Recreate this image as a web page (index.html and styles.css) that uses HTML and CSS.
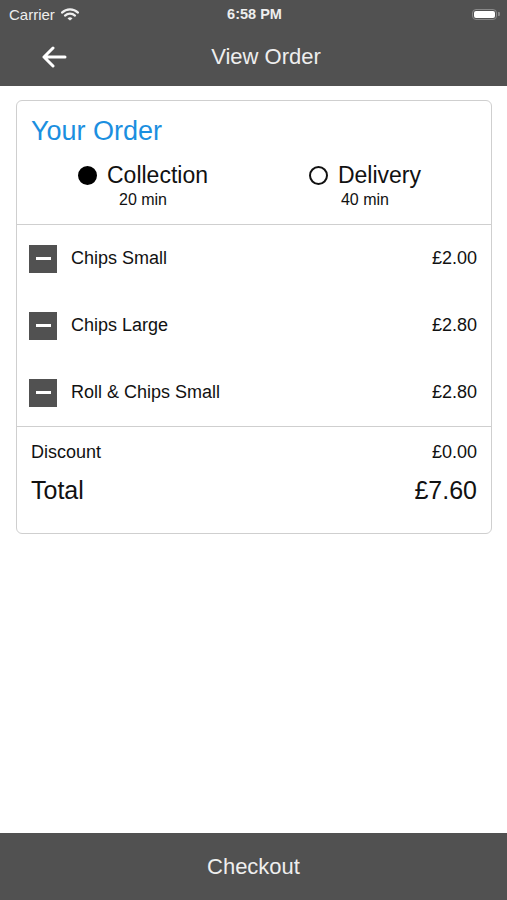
FILE: index.html
```html
<!DOCTYPE html>
<html lang="en">

<head>
    <meta charset="UTF-8">
    <meta name="viewport" content="width=device-width, initial-scale=1.0">
    <title>View Order</title>
    <link rel="stylesheet" href="styles.css">
</head>

<body>
    <div class="app">
        <div class="status-bar">
            <div class="status-left">
                <span>Carrier</span>
                <svg class="wifi" width="18" height="13" viewBox="0 0 18 13">
                    <path d="M1 4.6 A11.5 11.5 0 0 1 17 4.6" fill="none" stroke="#eee" stroke-width="2.2" stroke-linecap="round" />
                    <path d="M4 7.6 A7.2 7.2 0 0 1 14 7.6" fill="none" stroke="#eee" stroke-width="2.2" stroke-linecap="round" />
                    <path d="M6.5 10.4 L9 12.6 L11.5 10.4 A3.6 3.6 0 0 0 6.5 10.4 Z" fill="#eee" />
                </svg>
            </div>
            <div class="status-time">6:58 PM</div>
            <div class="status-right">
                <div class="battery">
                    <div class="battery-fill"></div>
                </div>
                <div class="battery-nub"></div>
            </div>
        </div>

        <div class="nav-bar">
            <button class="back-button">
                <svg width="26" height="22" viewBox="0 0 26 22">
                    <path d="M24 11 H3 M12 2 L3 11 L12 20" fill="none" stroke="#fff" stroke-width="3" stroke-linecap="round" stroke-linejoin="round" />
                </svg>
            </button>
            <div class="nav-title">View Order</div>
            <div class="nav-spacer"></div>
        </div>

        <div class="content">
            <div class="order-card">
                <div class="order-head">
                    <h1>Your Order</h1>
                    <div class="options">
                        <div class="option">
                            <div class="option-label">
                                <span class="radio checked"></span>
                                <span>Collection</span>
                            </div>
                            <div class="option-time">20 min</div>
                        </div>
                        <div class="option">
                            <div class="option-label">
                                <span class="radio"></span>
                                <span>Delivery</span>
                            </div>
                            <div class="option-time">40 min</div>
                        </div>
                    </div>
                </div>

                <div class="items">
                    <div class="item">
                        <span class="minus"></span>
                        <span class="item-name">Chips Small</span>
                        <span class="item-price">£2.00</span>
                    </div>
                    <div class="item">
                        <span class="minus"></span>
                        <span class="item-name">Chips Large</span>
                        <span class="item-price">£2.80</span>
                    </div>
                    <div class="item">
                        <span class="minus"></span>
                        <span class="item-name">Roll &amp; Chips Small</span>
                        <span class="item-price">£2.80</span>
                    </div>
                </div>

                <div class="totals">
                    <div class="discount-row">
                        <span>Discount</span>
                        <span>£0.00</span>
                    </div>
                    <div class="total-row">
                        <span>Total</span>
                        <span>£7.60</span>
                    </div>
                </div>
            </div>
        </div>

        <div class="checkout">Checkout</div>
    </div>
</body>

</html>
```

FILE: styles.css
```css
body,
html {
    margin: 0;
    padding: 0;
    height: 100%;
    font-family: "Liberation Sans", Arial, sans-serif;
    color: #111;
    background-color: #fff;
}

.app {
    height: 100%;
    display: flex;
    flex-direction: column;
}

.status-bar {
    height: 28px;
    background-color: #515151;
    color: #eee;
    display: flex;
    align-items: center;
    justify-content: space-between;
    padding: 0 7px 0 9px;
    font-size: 15px;
    flex-shrink: 0;
}

.status-left {
    display: flex;
    align-items: center;
    gap: 6px;
    width: 110px;
}

.status-time {
    font-weight: bold;
    font-size: 14.5px;
}

.status-right {
    width: 110px;
    display: flex;
    justify-content: flex-end;
    align-items: center;
}

.battery {
    width: 25px;
    height: 11px;
    border: 1.5px solid #888;
    border-radius: 4px;
    padding: 1px;
    box-sizing: border-box;
}

.battery-fill {
    height: 100%;
    background-color: #fff;
    border-radius: 2px;
}

.battery-nub {
    width: 2px;
    height: 4px;
    background-color: #888;
    border-radius: 0 1px 1px 0;
    margin-left: 1px;
}

.nav-bar {
    height: 58px;
    background-color: #515151;
    display: flex;
    align-items: center;
    padding: 0 55px 0 30px;
    flex-shrink: 0;
}

.back-button {
    width: 50px;
    height: 40px;
    background: none;
    border: none;
    padding: 0 0 0 11px;
    display: flex;
    align-items: center;
    cursor: pointer;
}

.nav-title {
    flex: 1;
    text-align: center;
    color: #eee;
    font-size: 22px;
}

.nav-spacer {
    width: 0;
}

.content {
    flex: 1;
    padding: 14px 15px 0 16px;
}

.order-card {
    border: 1px solid #cfcfcf;
    border-radius: 6px;
}

.order-head {
    padding: 14px 14px 14px;
    border-bottom: 1px solid #cfcfcf;
}

.order-head h1 {
    margin: 0;
    font-weight: normal;
    font-size: 27px;
    line-height: 32px;
    color: #1b8fe0;
}

.options {
    display: flex;
    justify-content: space-between;
    padding: 0 56px 0 47px;
    margin-top: 14px;
}

.option {
    display: flex;
    flex-direction: column;
    align-items: center;
}

.option-label {
    display: flex;
    align-items: center;
    gap: 10px;
    font-size: 23px;
    line-height: 28px;
}

.option-time {
    font-size: 16px;
    line-height: 20px;
    margin-top: 1px;
}

.radio {
    width: 19px;
    height: 19px;
    border-radius: 50%;
    border: 2px solid #111;
    box-sizing: border-box;
}

.radio.checked {
    background-color: #000;
    border-color: #000;
}

.items {
    border-bottom: 1px solid #cfcfcf;
}

.item {
    height: 67px;
    display: flex;
    align-items: center;
    padding: 0 14px 0 12px;
    font-size: 18px;
}

.minus {
    width: 28px;
    height: 28px;
    background-color: #515151;
    display: flex;
    align-items: center;
    justify-content: center;
    margin-right: 14px;
}

.minus::after {
    content: "";
    width: 15px;
    height: 3px;
    background-color: #fff;
}

.item-name {
    flex: 1;
}

.totals {
    padding: 14px 14px 28px;
}

.discount-row,
.total-row {
    display: flex;
    justify-content: space-between;
}

.discount-row {
    font-size: 18px;
    line-height: 22px;
}

.total-row {
    font-size: 25px;
    line-height: 30px;
    margin-top: 12px;
}

.checkout {
    height: 67px;
    background-color: #515151;
    color: #eee;
    font-size: 22px;
    display: flex;
    align-items: center;
    justify-content: center;
    flex-shrink: 0;
}
```
